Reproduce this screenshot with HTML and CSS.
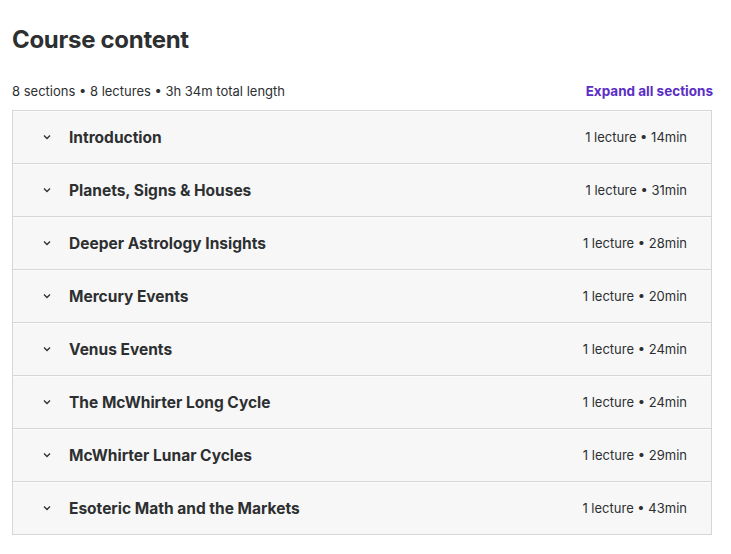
FILE: index.html
```html
<!DOCTYPE html>
<html>
<head>
<meta charset="utf-8">
<link rel="stylesheet" href="styles.css">
</head>
<body>
<div class="page">
  <h2 class="title">Course content</h2>
  <div class="meta">
    <span class="stats">8 sections • 8 lectures • 3h 34m total length</span>
    <button class="expand">Expand all sections</button>
  </div>
  <div class="accordion">
    <div class="row"><span class="chev"><svg width="12" height="12" viewBox="0 0 12 12"><path d="M3 4.5 L6 7.5 L9 4.5" fill="none" stroke="#2d2f31" stroke-width="1.3"/></svg></span><span class="name">Introduction</span><span class="info">1 lecture • 14min</span></div>
    <div class="row"><span class="chev"><svg width="12" height="12" viewBox="0 0 12 12"><path d="M3 4.5 L6 7.5 L9 4.5" fill="none" stroke="#2d2f31" stroke-width="1.3"/></svg></span><span class="name">Planets, Signs &amp; Houses</span><span class="info">1 lecture • 31min</span></div>
    <div class="row"><span class="chev"><svg width="12" height="12" viewBox="0 0 12 12"><path d="M3 4.5 L6 7.5 L9 4.5" fill="none" stroke="#2d2f31" stroke-width="1.3"/></svg></span><span class="name">Deeper Astrology Insights</span><span class="info">1 lecture • 28min</span></div>
    <div class="row"><span class="chev"><svg width="12" height="12" viewBox="0 0 12 12"><path d="M3 4.5 L6 7.5 L9 4.5" fill="none" stroke="#2d2f31" stroke-width="1.3"/></svg></span><span class="name">Mercury Events</span><span class="info">1 lecture • 20min</span></div>
    <div class="row"><span class="chev"><svg width="12" height="12" viewBox="0 0 12 12"><path d="M3 4.5 L6 7.5 L9 4.5" fill="none" stroke="#2d2f31" stroke-width="1.3"/></svg></span><span class="name">Venus Events</span><span class="info">1 lecture • 24min</span></div>
    <div class="row"><span class="chev"><svg width="12" height="12" viewBox="0 0 12 12"><path d="M3 4.5 L6 7.5 L9 4.5" fill="none" stroke="#2d2f31" stroke-width="1.3"/></svg></span><span class="name">The McWhirter Long Cycle</span><span class="info">1 lecture • 24min</span></div>
    <div class="row"><span class="chev"><svg width="12" height="12" viewBox="0 0 12 12"><path d="M3 4.5 L6 7.5 L9 4.5" fill="none" stroke="#2d2f31" stroke-width="1.3"/></svg></span><span class="name">McWhirter Lunar Cycles</span><span class="info">1 lecture • 29min</span></div>
    <div class="row"><span class="chev"><svg width="12" height="12" viewBox="0 0 12 12"><path d="M3 4.5 L6 7.5 L9 4.5" fill="none" stroke="#2d2f31" stroke-width="1.3"/></svg></span><span class="name">Esoteric Math and the Markets</span><span class="info">1 lecture • 43min</span></div>
  </div>
</div>
</body>
</html>
```
FILE: styles.css
```css
html, body {
  margin: 0;
  padding: 0;
  background: #ffffff;
}
body {
  font-family: "Inter", "Noto Sans", sans-serif;
  color: #2d2f31;
}
.page {
  padding: 24px 19px 0 12px;
}
.title {
  margin: 0;
  font-size: 24px;
  font-weight: 700;
  line-height: 32px;
  letter-spacing: -0.3px;
}
.meta {
  display: flex;
  justify-content: space-between;
  align-items: center;
  margin-top: 20px;
  height: 34px;
  padding-bottom: 4px;
  box-sizing: border-box;
}
.stats {
  font-size: 13px;
}
.expand {
  border: 0;
  background: none;
  padding: 0;
  font-family: inherit;
  font-size: 13.5px;
  font-weight: 700;
  color: #5b2ec4;
  margin-right: -1px;
}
.accordion {
  border: 1px solid #d6d6d6;
  border-bottom: 0;
}
.row {
  display: flex;
  align-items: center;
  height: 52px;
  box-sizing: content-box;
  border-bottom: 1px solid #d6d6d6;
  background: #f7f7f7;
  box-shadow: inset 0 1px 0 #fcfcfc;
  padding: 0 24px 0 28px;
}
.chev {
  width: 12px;
  height: 12px;
  display: flex;
  margin-right: 16px;
}
.name {
  flex: 1;
  font-size: 15.5px;
  font-weight: 700;
}
.info {
  font-size: 13px;
}
```
